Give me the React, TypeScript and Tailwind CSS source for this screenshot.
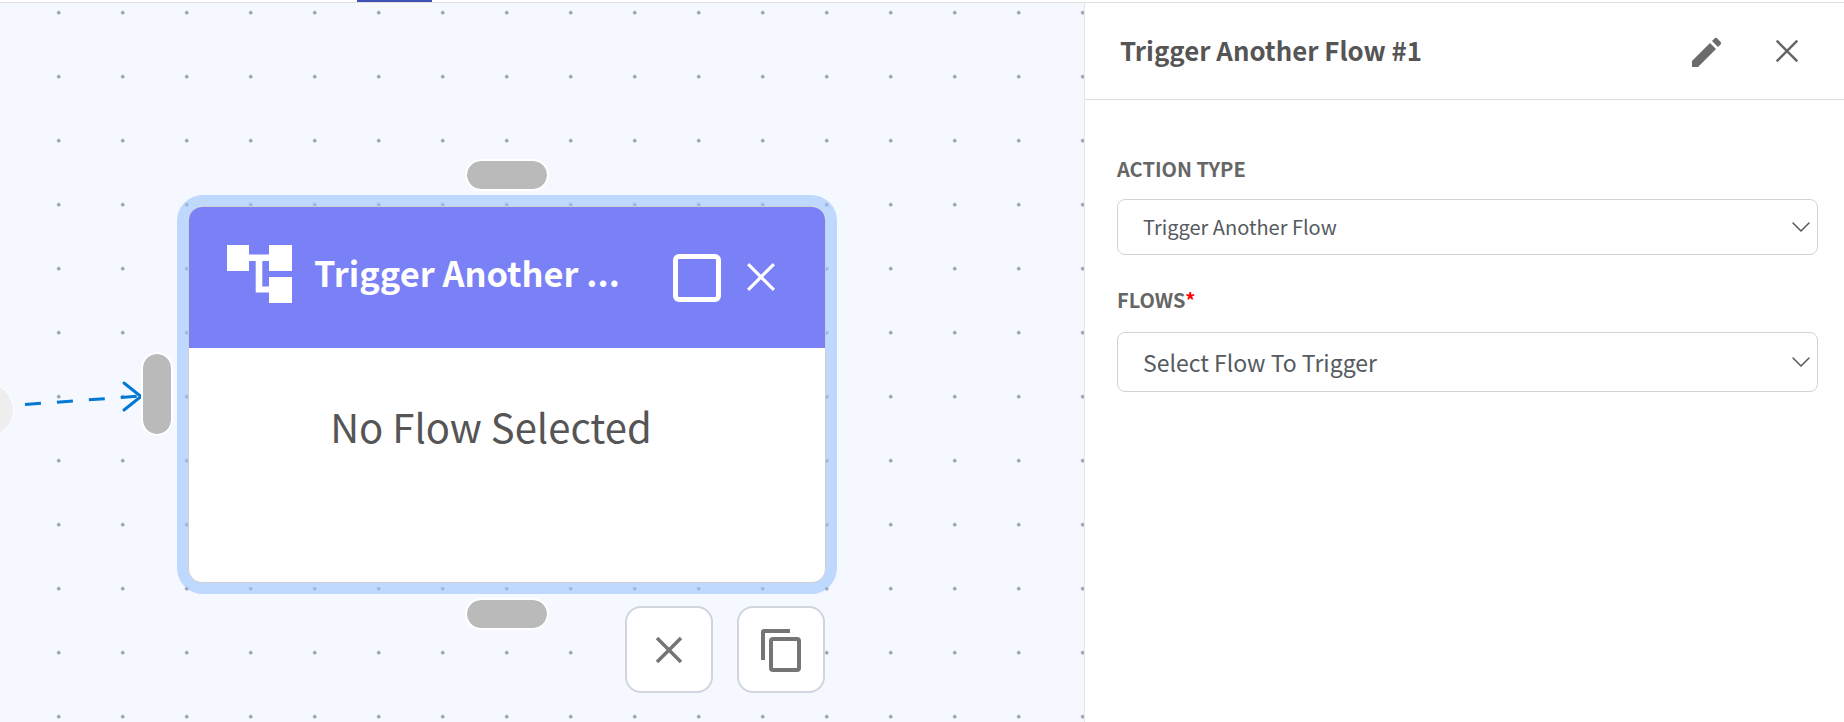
import { ChevronDown } from 'lucide-react';

const font = { fontFamily: '"Noto Sans CJK SC", "Noto Sans", sans-serif' };

function FlowIcon() {
  return (
    <svg width="65" height="58" viewBox="0 0 65 58" fill="white" className="mb-[7px] shrink-0">
      <rect x="0" y="0" width="22" height="26" />
      <rect x="42" y="0" width="23" height="26" />
      <rect x="42" y="32" width="23" height="26" />
      <path d="M22 9.5h20v6.5h-6.7v25.6H42v6H28.7V16H22z" />
    </svg>
  );
}

function CloseGlyph({ size, stroke, color }: { size: number; stroke: number; color: string }) {
  return (
    <svg width={size} height={size} viewBox="0 0 28 28" fill="none" stroke={color} strokeWidth={stroke}>
      <path d="M2 2l24 24M26 2L2 26" />
    </svg>
  );
}

function SelectBox({ label, size, height }: { label: string; size: string; height: string }) {
  return (
    <div className={`flex w-[701px] items-center justify-between rounded-lg border border-[#ced4da] bg-white pl-[25px] text-[#555a60] ${height} ${size}`}>
      <span>{label}</span>
      <ChevronDown size={32} strokeWidth={1.1} className="text-[#555]" />
    </div>
  );
}

function Handle({ className }: { className: string }) {
  return <div className={`absolute rounded-full bg-[#bababa] outline-2 outline-white ${className}`} />;
}

export default function App() {
  return (
    <div style={font} className="flex h-[722px] w-[1844px] flex-col overflow-hidden bg-white">
      <div className="relative h-[3px] shrink-0 border-b border-[#e0e0e0]">
        <div className="absolute left-[357px] top-0 h-[2px] w-[75px] bg-[#3f51b5]" />
      </div>
      <div className="flex min-h-0 flex-1">
        <div className="relative flex-1 overflow-hidden bg-[#f5f8ff] bg-[radial-gradient(circle,#8f93a6_1.4px,transparent_1.9px)] bg-[size:64px_64px] bg-[position:26.7px_-22.3px]">
          <div className="absolute -left-[41px] top-[380px] h-[54px] w-[54px] rounded-full bg-[#eeeeee] outline-1 outline-white" />
          <svg className="absolute left-0 top-[370px]" width="150" height="50" fill="none" stroke="#0078d4" strokeWidth="3">
            <path d="M25 31.5L141 23" strokeDasharray="16 16" />
            <path d="M124 10l17 13.5L124 37" strokeLinecap="round" />
          </svg>
          <Handle className="left-[143px] top-[351px] h-[80px] w-[28px]" />
          <Handle className="left-[467px] top-[158px] h-[28px] w-[80px]" />
          <Handle className="left-[467px] top-[597px] h-[28px] w-[80px]" />

          <div className="absolute left-[177px] top-[192px] h-[399px] w-[660px] rounded-[26px] border-[11px] border-[#9bc3fe99]">
            <div className="flex h-full flex-col overflow-hidden rounded-[14px] border border-[#cfcfcf] bg-white">
              <div className="flex h-[141px] shrink-0 items-center bg-[#7a80f6] pl-[38px]">
                <FlowIcon />
                <div className="mb-[10px] ml-[22px] w-[359px] text-[34.4px] font-bold leading-none text-white">Trigger Another ...</div>
                <div className="h-[48px] w-[48px] shrink-0 rounded-md border-[5px] border-white" />
                <div className="ml-[25px] mb-[2px]">
                  <CloseGlyph size={30} stroke={3} color="white" />
                </div>
              </div>
              <div className="flex flex-1 justify-center pr-[32px] pt-[58px] text-[40px] leading-none text-[#555]">
                <span>No Flow Selected</span>
              </div>
            </div>
          </div>

          <div className="absolute left-[625px] top-[603px] flex gap-[24px]">
            <button className="flex h-[87px] w-[88px] items-center justify-center rounded-2xl border-2 border-[#d0d5de] bg-white">
              <CloseGlyph size={28} stroke={3.5} color="#757575" />
            </button>
            <button className="flex h-[87px] w-[88px] items-center justify-center rounded-2xl border-2 border-[#d0d5de] bg-white">
              <svg width="40" height="44" viewBox="0 0 40 44" fill="none" stroke="#757575" strokeWidth="4">
                <path d="M2 32V4a1 1 0 0 1 1-1h26" />
                <rect x="10" y="11" width="28" height="31" rx="2" />
              </svg>
            </button>
          </div>
        </div>

        <div className="flex w-[760px] shrink-0 flex-col border-l border-[#e4e6ea] bg-white">
          <div className="flex h-[97px] shrink-0 items-center border-b border-[#e0e0e0] pl-[35px] pr-[45px]">
            <div className="mb-[2px] flex-1 text-[25.8px] font-bold text-[#555]">Trigger Another Flow #1</div>
            <svg width="30" height="30" viewBox="0 0 30 30" fill="#6b6b6b" className="mt-[2px]">
              <path d="M0 24L18 6l6 6L6 30H0z" />
              <path d="M20 4l2.5-2.5a2 2 0 0 1 2.8 0l3.2 3.2a2 2 0 0 1 0 2.8L26 10z" />
            </svg>
            <div className="ml-[53px]">
              <CloseGlyph size={24} stroke={3} color="#666" />
            </div>
          </div>
          <div className="pl-[32px] pt-[57px]">
            <div className="mb-[18px] text-[20px] font-bold leading-[24px] text-[#666]">ACTION TYPE</div>
            <SelectBox label="Trigger Another Flow" size="text-[20px]" height="h-[56px]" />
            <div className="mb-[18px] mt-[31px] text-[20px] font-bold leading-[28px] text-[#666]">
              FLOWS<span className="text-[#ff0000]">*</span>
            </div>
            <SelectBox label="Select Flow To Trigger" size="text-[23px]" height="h-[60px]" />
          </div>
        </div>
      </div>
    </div>
  );
}
